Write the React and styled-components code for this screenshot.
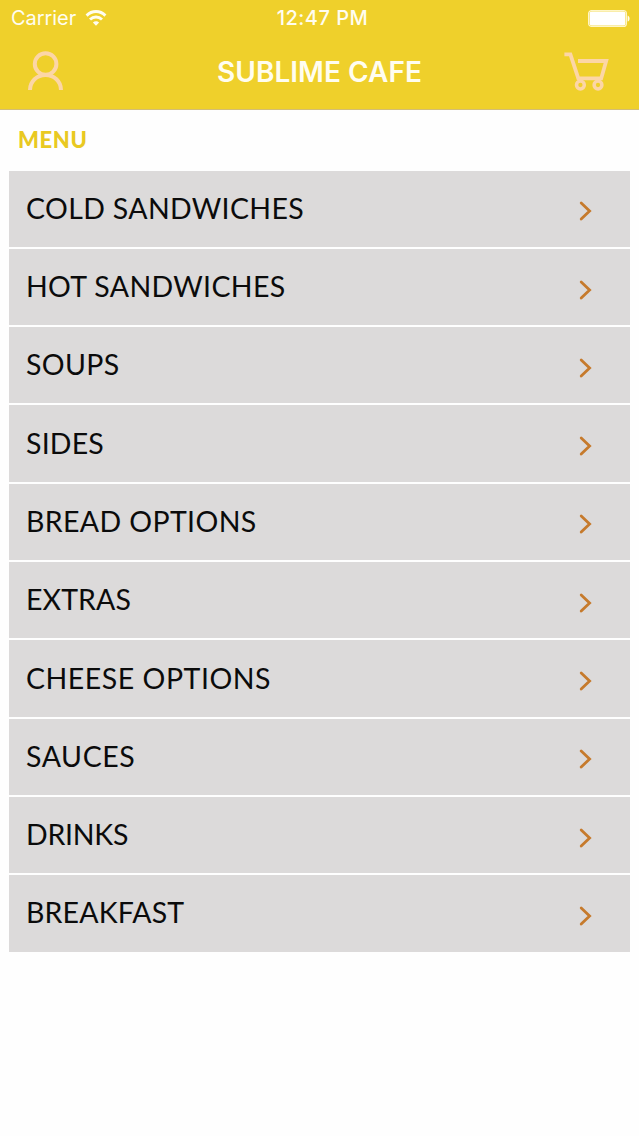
import React from 'react'
import styled, { createGlobalStyle } from 'styled-components'

const GlobalStyle = createGlobalStyle`
  * {
    box-sizing: border-box;
  }
  body {
    margin: 0;
    background: #fefefe;
  }
`

const Screen = styled.div`
  display: flex;
  flex-direction: column;
  width: 639px;
  height: 1136px;
  overflow: hidden;
  font-family: Lato, sans-serif;
`

const Header = styled.header`
  display: flex;
  flex-direction: column;
  height: 110px;
  background: #efd02b;
  border-bottom: 1px solid #d3bd74;
  font-family: Inter, sans-serif;
  color: #fffdf0;
`

const StatusBar = styled.div`
  display: grid;
  grid-template-columns: 1fr auto 1fr;
  align-items: center;
  height: 36px;
  padding: 0 9px 0 11px;
  font-size: 20px;
  line-height: 24px;
`

const Carrier = styled.div`
  display: flex;
  align-items: center;
  gap: 9px;
  letter-spacing: -0.05px;
`

const Clock = styled.span`
  font-weight: 500;
  letter-spacing: 0.5px;
  padding-left: 4px;
`

const Battery = styled.svg`
  justify-self: end;
`

const NavBar = styled.div`
  display: flex;
  align-items: center;
  justify-content: space-between;
  height: 72px;
  padding: 0 30px 0 27px;
`

const Title = styled.h1`
  margin: 0 0 0 11px;
  font-size: 28px;
  line-height: 34px;
  font-weight: 600;
  letter-spacing: 0.05px;
`

const NavIcon = styled.svg`
  margin-top: -3px;
  fill: none;
  stroke: #fcd6a6;
  stroke-width: 4;
`

const Heading = styled.h2`
  margin: 0;
  height: 60.6px;
  padding: 16px 18px 0;
  font-size: 22px;
  line-height: 28px;
  font-weight: 900;
  letter-spacing: 0.6px;
  color: #e9c922;
`

const List = styled.ul`
  display: flex;
  flex-direction: column;
  gap: 2px;
  margin: 0 9px;
  padding: 0;
  list-style: none;
`

const Row = styled.li`
  display: flex;
  align-items: center;
  justify-content: space-between;
  height: 76.3px;
  padding: 0 38px 0 17px;
  background: #dcdada;
`

const Label = styled.span`
  margin-top: -2px;
  font-size: 28.5px;
  line-height: 36px;
  color: #0b0b0b;
  letter-spacing: ${props => props.$spacing || 0}px;
`

const Chevron = styled.svg`
  margin-top: 5px;
  fill: none;
  stroke: #c67a2c;
  stroke-width: 2.8;
  stroke-linecap: round;
`

const items = [
  { name: 'COLD SANDWICHES', spacing: 0.35 },
  { name: 'HOT SANDWICHES', spacing: 0.35 },
  { name: 'SOUPS', spacing: 0.35 },
  { name: 'SIDES', spacing: 0.2 },
  { name: 'BREAD OPTIONS', spacing: 0.37 },
  { name: 'EXTRAS', spacing: 0.1 },
  { name: 'CHEESE OPTIONS', spacing: 0.52 },
  { name: 'SAUCES', spacing: 0.6 },
  { name: 'DRINKS', spacing: -0.25 },
  { name: 'BREAKFAST', spacing: 0.15 },
]

const WifiIcon = () => (
  <svg width="22" height="16" viewBox="0 0 22 16" fill="none" stroke="#fffdf0" strokeWidth="2.9">
    <path d="M1.6 5.6C7 0.2 15 0.2 20.4 5.6" />
    <path d="M5 9.5C8.5 6.1 13.5 6.1 17 9.5" />
    <path d="M11 15.8L7.9 12.6C9.7 10.7 12.3 10.7 14.1 12.6Z" fill="#fffdf0" stroke="none" />
  </svg>
)

const BatteryIcon = () => (
  <Battery width="42" height="17" viewBox="0 0 42 17">
    <rect x="0.6" y="0.6" width="37.8" height="15.8" rx="3" fill="none" stroke="#fff6c8" strokeWidth="1.2" />
    <rect x="1.6" y="1.6" width="35.8" height="13.8" rx="2" fill="#fff" />
    <path d="M39.6 5.4C42.2 6.2 42.2 10.8 39.6 11.6Z" fill="#fffdf0" />
  </Battery>
)

const ProfileIcon = () => (
  <NavIcon width="37" height="40" viewBox="0 0 37 40">
    <circle cx="18.6" cy="13" r="10.8" />
    <path d="M3 39C3 30.2 10 24 18.5 24S34 30.2 34 39" />
  </NavIcon>
)

const CartIcon = () => (
  <NavIcon width="45" height="40" viewBox="0 0 45 40">
    <path d="M0.4 3.4H6.4L14.3 27.4H37.2L42.2 10H14" strokeWidth="3.8" />
    <circle cx="16.4" cy="34" r="3.9" strokeWidth="3.5" />
    <circle cx="34" cy="34" r="3.9" strokeWidth="3.5" />
  </NavIcon>
)

const MenuRow = ({ item }) => (
  <Row>
    <Label $spacing={item.spacing}>{item.name}</Label>
    <Chevron width="13" height="20" viewBox="0 0 13 20">
      <path d="M2.2 2L10.6 10L2.2 18" />
    </Chevron>
  </Row>
)

const App = () => (
  <>
    <GlobalStyle />
    <Screen>
      <Header>
        <StatusBar>
          <Carrier>
            Carrier
            <WifiIcon />
          </Carrier>
          <Clock>12:47 PM</Clock>
          <BatteryIcon />
        </StatusBar>
        <NavBar>
          <ProfileIcon />
          <Title>SUBLIME CAFE</Title>
          <CartIcon />
        </NavBar>
      </Header>
      <Heading>MENU</Heading>
      <List>
        {items.map(item => (
          <MenuRow key={item.name} item={item} />
        ))}
      </List>
    </Screen>
  </>
)

export default App
